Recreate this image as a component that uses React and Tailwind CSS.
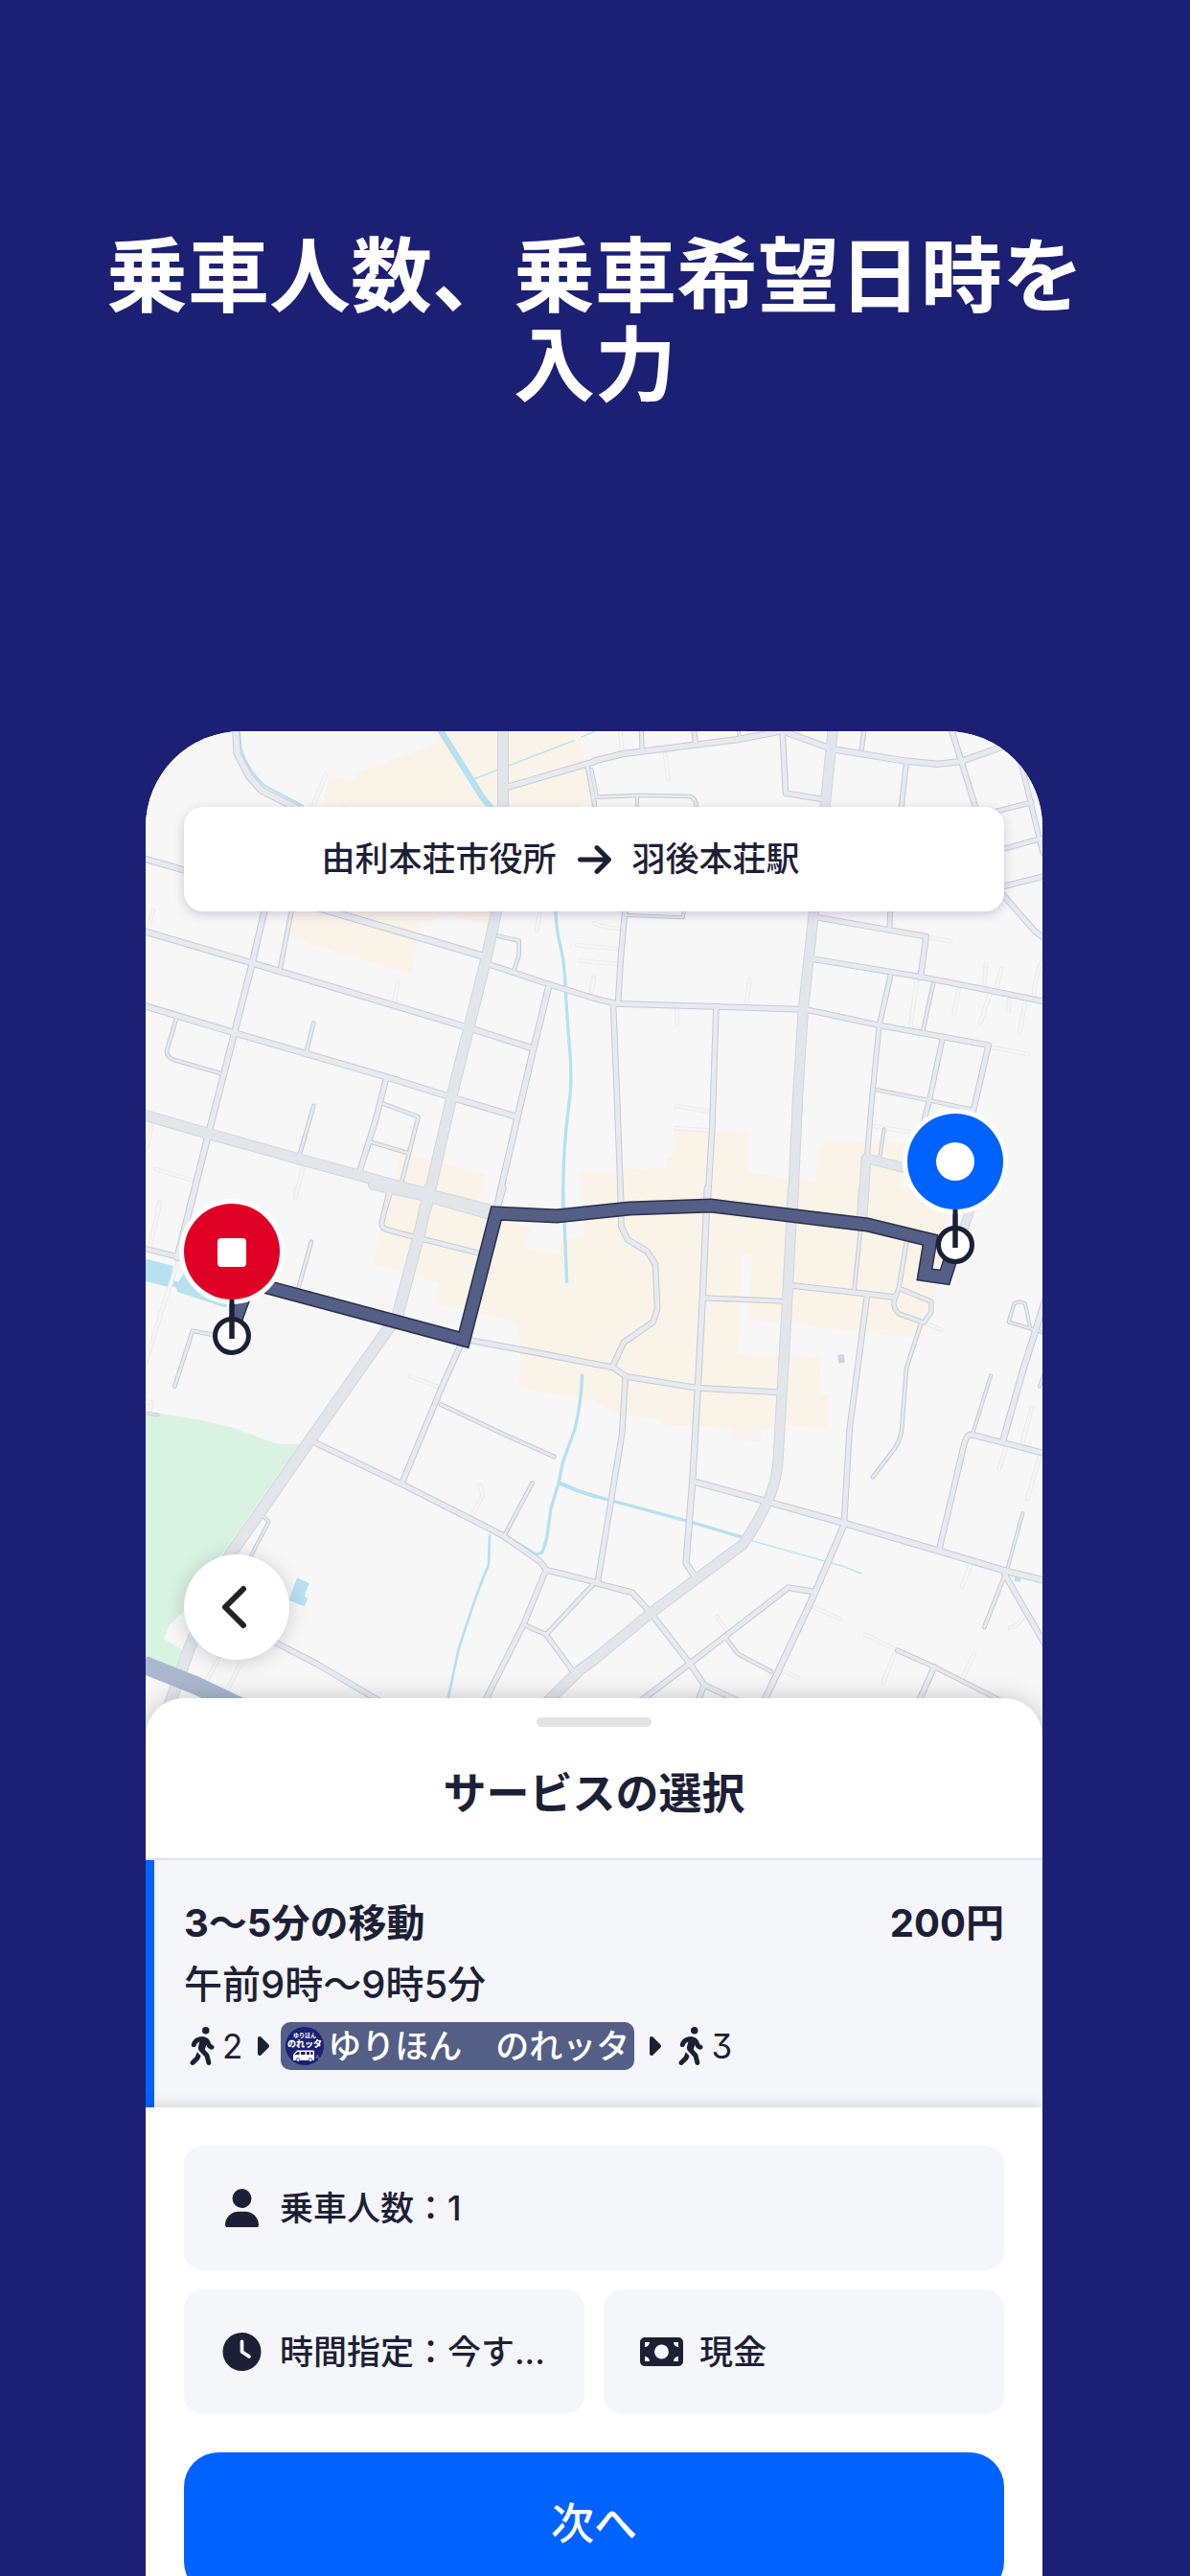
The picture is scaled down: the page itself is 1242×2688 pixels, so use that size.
import React from 'react'
import { FaArrowRight, FaCaretRight, FaClock, FaMoneyBill, FaPersonWalking, FaUser } from 'react-icons/fa6'

// The map is drawn as four tiles, each with its own local units (3 per map pixel).
// Roads are [width, path].
const TILES = [
  {
    id: 'nw',
    transform: 'translate(150 760) scale(0.33333)',
    areas: [
      ['#faf4e8', 'M565 260 L565 215 L582 147 L655 163 L675 138 L925 45 L905 0 L1360 0 L1380 90 L1402 225 L1330 260Z'],
      ['#f7f7f7', 'M1368 30 L1420 0 L1420 85 L1380 90Z'],
      ['#faf4e8', 'M475 560 L455 655 L840 772 L868 600 L905 606 L940 560Z'],
      ['#faf4e8', 'M950 575 L1075 617 L1085 560Z'],
      ['#faf4e8', 'M805 1330 L940 1362 L1070 1398 L1050 1500 L780 1500 L790 1400Z'],
      ['#faf4e8', 'M1362 1390 L1412 1386 L1412 1500 L1372 1500Z'],
    ],
    water: [
      [6, 'M300 0 L304 60 Q326 134 380 180 L500 243'],
      [20, 'M925 0 L1060 215 L1100 265'],
      [4, 'M1030 160 L1350 37'],
      [4, 'M1368 28 L1412 10'],
      [10, 'M1290 560 Q1290 620 1302 670 Q1320 740 1320 810 L1330 960 Q1342 1080 1335 1150 Q1320 1260 1315 1360 L1312 1500'],
    ],
    service: [
      'M570 145 L530 245', 'M625 242 L605 262', 'M30 570 L12 630', 'M795 797 L785 860', 'M500 1370 L475 1468',
      'M38 1380 L155 1415', 'M25 1235 L10 1310', 'M50 1485 L40 1510', 'M1240 580 L1230 632', 'M1357 678 L1410 684',
      'M1365 726 L1410 732', 'M1408 782 L1400 830',
    ],
    minor: [
      [24, 'M288 0 L293 80 L330 150 L370 195 L480 250'],
      [22, 'M1145 182 L1410 105'],
      [16, 'M1390 120 L1412 240'],
      [22, 'M0 408 L130 445'],
      [22, 'M378 570 L340 735 L205 1260 L145 1500'],
      [16, 'M463 570 L428 748'],
      [24, 'M540 560 L1060 712'],
      [22, 'M0 635 L340 735 L1020 938 L1220 1003'],
      [14, 'M1110 650 L1175 665 L1175 710 L1160 755'],
      [20, 'M1085 740 L1265 800 L1410 845'],
      [22, 'M0 868 L290 955 L755 1090 L980 1160 L1165 1215'],
      [22, 'M1268 810 L1220 1005 L1165 1240 L1105 1500'],
      [14, 'M103 905 L72 1010 Q72 1030 95 1038 L240 1080'],
      [14, 'M532 922 L510 1010'],
      [20, 'M758 1100 L725 1230 L675 1390'],
      [14, 'M750 1175 L860 1216 L805 1430'],
      [14, 'M712 1295 L828 1330'],
      [14, 'M532 1182 L488 1335'],
      [18, 'M772 1450 L757 1500'],
    ],
    major: [
      [36, 'M1125 0 L1125 300 L1105 570 L1075 710 L965 1150 L885 1500'],
      [36, 'M0 1210 L200 1268 L500 1352 L890 1458 L1100 1512'],
    ],
  },
  {
    id: 'ne',
    transform: 'translate(620 760) scale(0.33333)',
    areas: [
      ['#faf4e8', 'M0 1388 L228 1375 L228 1345 L246 1345 L250 1260 L483 1265 L478 1390 L695 1418 L700 1305 L720 1305 L725 1285 L860 1293 L1000 1300 L965 1400 L965 1445 L1130 1480 L1130 1500 L0 1500Z'],
    ],
    water: [],
    service: [
      'M82 10 L88 70', 'M222 80 L233 158', 'M487 787 L478 862', 'M260 875 V925', 'M257 1183 L358 1198',
      'M255 1252 L355 1258', 'M0 610 Q30 625 80 627', 'M0 684 L75 690', 'M0 732 L72 737', 'M0 780 L-6 820',
      'M1050 655 L1115 665', 'M1227 738 L1222 808', 'M1275 753 L1258 818', 'M1142 815 L1127 893',
      'M1238 835 L1210 922', 'M1300 848 L1298 885', 'M1350 855 L1332 952', 'M1405 725 Q1380 770 1377 840',
      'M1010 795 L990 935', 'M1245 998 L1360 1020', 'M875 1245 L995 1265',
    ],
    minor: [
      [22, 'M0 102 L90 80 L450 35 L590 8 L745 65 L975 102 L1075 112 L1150 103 L1300 50'],
      [20, 'M590 15 L600 203 L715 222'],
      [18, 'M312 0 L318 48'],
      [16, 'M148 0 L150 65'],
      [12, 'M452 0 L455 25'],
      [16, 'M846 0 L838 65'],
      [18, 'M978 105 L962 250'],
      [20, 'M1118 0 L1150 103 L1195 250'],
      [18, 'M1250 262 L1370 232'],
      [18, 'M1335 100 L1405 390'],
      [18, 'M1280 378 L1410 342'],
      [20, 'M1280 495 L1410 463'],
      [20, 'M1275 515 L1380 635 L1420 665'],
      [14, 'M-8 130 L8 215 L150 210 L300 213 Q322 220 320 250'],
      [12, 'M135 215 V250'],
      [20, 'M97 570 L85 700 L75 862'],
      [12, 'M100 585 L278 592 L282 570'],
      [20, 'M0 845 L70 862 L400 872 L655 880 L700 888 L895 930 L1235 992 L1187 1200'],
      [20, 'M690 590 L870 622 L1040 652 L1022 780'],
      [20, 'M685 722 L1035 780 L1410 855'],
      [18, 'M928 570 L925 625'],
      [20, 'M60 865 L72 1160 L85 1500'],
      [20, 'M382 880 L370 1250 L355 1500'],
      [18, 'M928 775 L893 930 L870 1160 L855 1340'],
      [14, 'M1062 800 L1030 945'],
      [18, 'M1090 975 L1050 1165 L1030 1240'],
      [14, 'M885 1132 L1050 1165 L1190 1195'],
      [12, 'M908 1255 L895 1340'],
    ],
    major: [
      [34, 'M748 0 L725 230 L690 560 L655 880 L638 1150 L622 1500'],
      [32, 'M980 1378 L852 1346 L842 1500'],
    ],
  },
  {
    id: 'sw',
    transform: 'translate(150 1240) scale(0.33333 0.34436)',
    areas: [
      ['#faf4e8', 'M790 0 L740 130 L718 232 L925 285 L912 350 L1165 405 L1180 460 L1175 605 L1412 645 L1412 0Z'],
      ['#f7f7f7', 'M1060 0 L1040 60 L1210 120 L1195 180 L1300 198 L1310 158 L1382 143 L1368 0Z'],
      ['#d8f3e2', 'M0 675 L50 682 L180 702 L275 724 L390 765 L430 777 L490 773 L240 1115 L150 1260 L80 1325 L63 1365 L120 1398 L100 1460 L0 1425Z'],
      ['#b6e1f1', 'M0 212 L92 235 L80 300 L0 280Z'],
      ['#b6e1f1', 'M88 278 L108 284 L128 255 L262 348 L258 362 L108 314 L100 300 L86 296Z'],
      ['#b6e1f1', 'M480 1180 L518 1197 L503 1235 L513 1243 L503 1267 L455 1248Z'],
    ],
    water: [
      [10, 'M1312 0 L1318 120 L1325 288'],
      [10, 'M1373 563 Q1370 650 1350 730 L1312 830 L1300 890 L1275 970 L1262 1060 L1248 1103 L1230 1110 L1100 1035'],
      [12, 'M1300 893 L1370 920 L1420 935'],
      [8, 'M1083 1050 L1080 1140 Q1040 1230 985 1400 L950 1560'],
    ],
    service: [
      'M50 45 L20 175', 'M110 215 L60 360 L0 545', 'M835 570 L930 605', 'M1052 898 L1062 930 L1025 995',
      'M235 1425 L190 1503', 'M302 1443 L255 1532', 'M0 645 L25 650 L20 670', 'M478 0 L475 25',
    ],
    minor: [
      [18, 'M770 5 L745 105 Q745 122 765 126 L850 148 L1045 195'],
      [22, 'M160 0 L105 210'],
      [18, 'M0 182 L110 208'],
      [14, 'M525 162 L485 300'],
      [14, 'M215 443 L153 432 L97 600'],
      [22, 'M1125 0 L1108 55'],
      [20, 'M1020 460 L1230 498 L1410 532'],
      [20, 'M990 480 L930 610 L810 890'],
      [14, 'M930 655 L1120 742 L1285 813'],
      [20, 'M535 770 L820 902 L1020 1000 L1120 1050 L1240 1130 L1262 1157 L1410 1192'],
      [20, 'M1260 1155 L1190 1320 L1065 1560'],
      [16, 'M1190 1322 L1260 1352 L1412 1195'],
      [18, 'M1260 1352 L1345 1465'],
      [14, 'M1217 893 L1130 1050'],
      [12, 'M370 990 L392 1010 L335 1115'],
      [20, 'M400 1370 L540 1440 L750 1560'],
      [10, 'M0 680 L45 687'],
    ],
    major: [
      [36, 'M720 -12 L890 24 L1085 78'],
      [38, 'M895 0 L865 130 L795 385 L530 750 L365 980 L270 1110 L140 1400 L112 1480 L75 1580'],
      [35, 'M1240 1580 L1275 1545 L1365 1460 L1410 1428'],
    ],
  },
  {
    id: 'se',
    transform: 'translate(620 1240) scale(0.33333 0.34436)',
    areas: [
      ['#faf4e8', 'M0 0 L1110 0 L1108 60 L1080 250 L1065 340 L1025 455 L485 398 L495 198 L463 203 L450 500 L710 512 L706 620 L738 625 L725 730 L600 717 L590 730 L425 735 L425 727 L208 715 L205 702 L68 680 L0 648Z'],
      ['#f5f4f3', 'M425 733 L522 730 L522 768 L422 762Z'],
      ['#cfd6df', 'M762 505 L782 502 L786 528 L766 531Z'],
      ['#b6e1f1', 'M1318 1177 L1337 1180 L1335 1193 L1315 1190Z'],
    ],
    water: [
      [10, 'M0 932 L300 1010 L480 1062'],
      [4, 'M480 1064 L780 1145 L838 1168'],
    ],
    service: [
      'M1035 408 L1087 428', 'M1370 668 L1340 775', 'M1290 785 L1268 850', 'M1395 815 L1357 940',
      'M1180 1138 L1152 1208', 'M1345 1295 Q1325 1330 1302 1332', 'M850 1353 L945 1398 L905 1498',
      'M1190 1412 L1155 1482', 'M685 1268 L770 1305', 'M385 1300 L415 1340', 'M580 1455 L637 1483',
    ],
    minor: [
      [20, 'M83 0 L85 115 L105 155 L165 190 L192 230 L198 365 L185 405 L93 467 L60 535'],
      [20, 'M0 532 L60 543 L100 570 L325 605 L580 618'],
      [22, 'M355 0 L340 330 L325 605 L308 890 L288 1135 L318 1180'],
      [18, 'M345 332 L590 342'],
      [20, 'M625 295 L855 320 L942 330'],
      [14, 'M835 120 L815 305'],
      [16, 'M978 165 L955 300 L940 340 Q935 365 955 380 L1032 407 L1056 375 V343 L960 305'],
      [14, 'M1025 405 L978 545 L963 735 Q955 770 940 790 L873 875'],
      [20, 'M855 325 L800 730 L783 1010'],
      [20, 'M98 570 L88 740 L12 1190'],
      [22, 'M310 888 L545 950 L785 1015 L1085 1100 L1290 1160 L1410 1188'],
      [22, 'M785 1015 L685 1240 L520 1580'],
      [20, 'M0 1195 L120 1225 L180 1290 L300 1440 L345 1505 L470 1562'],
      [20, 'M345 1505 L318 1570'],
      [20, 'M685 1222 L608 1210 L300 1440 L130 1565'],
      [14, 'M415 1365 L450 1410 L555 1465'],
      [12, 'M1242 568 L1185 745'],
      [20, 'M1082 1090 L1160 770 Q1168 742 1185 747 L1410 803'],
      [22, 'M1412 340 L1345 545 L1280 765'],
      [12, 'M1412 438 L1298 405 L1315 350 Q1330 338 1350 350 L1365 420'],
      [12, 'M1342 985 L1295 1150'],
      [14, 'M1285 1175 L1222 1330'],
      [20, 'M1286 1170 L1345 1270 L1420 1395'],
      [12, 'M1410 560 L1395 600'],
      [16, 'M950 1400 L1065 1450 L1290 1560'],
      [20, 'M1065 1450 L1012 1565'],
    ],
    major: [
      [34, 'M623 0 L605 340 L575 840 Q567 900 545 945 Q510 1020 465 1080 L180 1285 L0 1428'],
      [34, 'M845 0 L838 100'],
      [30, 'M1200 0 L1155 130'],
    ],
  },
]

const ROUTE = 'M242 1388 L260 1338 L484 1398 L518 1266 L581 1269 L657 1261 L742 1258 L905 1278 L971 1294 L965 1330 L986 1333 L997 1299'

function MapLayer({ render }) {
  return TILES.map((tile) => (
    <g key={tile.id} transform={tile.transform}>
      {render(tile)}
    </g>
  ))
}

function strokes(roads, color, inset = 0) {
  return roads.map(([width, d]) => <path key={d} d={d} stroke={color} strokeWidth={width - inset} />)
}

function Pin({ x, y, stemEnd, color, children }) {
  return (
    <g>
      <circle cx={x} cy={stemEnd - 3} r="17.5" fill="#fff" stroke="#1c2036" strokeWidth="5" />
      <path d={`M${x} ${y + 40} V${stemEnd}`} stroke="#1c2036" strokeWidth="5" />
      <circle cx={x} cy={y} r="55" fill="#fff" />
      <circle cx={x} cy={y} r="50" fill={color} />
      <path d={`M${x} ${y + 50} V${stemEnd}`} stroke="#1c2036" strokeWidth="5" />
      {children}
    </g>
  )
}

function RouteMap() {
  return (
    <svg viewBox="152 763 936 1049" className="block w-full" aria-hidden="true">
      <rect x="152" y="763" width="936" height="1049" fill="#f7f7f7" />
      <MapLayer render={(t) => t.areas.map(([fill, d]) => <path key={d} d={d} fill={fill} />)} />
      <g fill="none" strokeLinejoin="round" strokeLinecap="butt">
        <MapLayer render={(t) => strokes(t.water, '#b6e1f1')} />
      </g>
      <g fill="none" strokeLinejoin="round" strokeLinecap="round">
        <MapLayer render={(t) => strokes(t.service.map((d) => [14, d]), '#e9e9ea')} />
        <MapLayer render={(t) => strokes(t.service.map((d) => [14, d]), '#f5f5f5', 5)} />
        <MapLayer render={(t) => strokes(t.minor, '#c6cad4')} />
        <MapLayer render={(t) => strokes(t.major, '#d0d6dc')} />
        <MapLayer render={(t) => strokes(t.minor, '#e7eaef', 6)} />
        <MapLayer render={(t) => strokes(t.major, '#e2e6ea', 6)} />
      </g>
      <path d="M150 1737 L205 1759 L262 1786" fill="none" stroke="#a9b8cf" strokeWidth="19" />
      <path d={ROUTE} fill="none" stroke="#2b2f48" strokeWidth="15" />
      <path d={ROUTE} fill="none" stroke="#545f87" strokeWidth="12" />
      <Pin x={242} y={1306} stemEnd={1397} color="#e00025">
        <rect x="227" y="1292" width="30" height="30" rx="4" fill="#fff" />
      </Pin>
      <Pin x={997} y={1212} stemEnd={1302} color="#0062ff">
        <circle cx="997" cy="1212" r="20" fill="#fff" />
      </Pin>
    </svg>
  )
}

function BusLogo() {
  return (
    <svg viewBox="0 0 40 40" className="size-10 shrink-0" aria-hidden="true">
      <circle cx="20" cy="20" r="20" fill="#1b1f76" />
      <g fill="#fff" textAnchor="middle" fontWeight="700">
        <text x="20" y="11" fontSize="6">ゆりほん</text>
        <text x="20" y="21" fontSize="9" fontWeight="900">のれッタ</text>
      </g>
      <path d="M8 35 V29 L12 24.500 H29 Q30 24.500 30 26 V35Z" fill="#fff" />
      <path d="M9.500 29 L12.500 26 H14.500 V29Z M16 26 H20.500 V29 H16Z M22 26 H25 V29 H22Z M26.300 26 H28.500 V29 H26.300Z" fill="#1b1f76" />
      <circle cx="13" cy="34.500" r="1.800" fill="#fff" stroke="#1b1f76" strokeWidth="0.800" />
      <circle cx="26" cy="34.500" r="1.800" fill="#fff" stroke="#1b1f76" strokeWidth="0.800" />
      <path d="M32 33 a1.500 1.500 0 1 1 2 1 M32 30.500 l2 -1" fill="none" stroke="#8c90c4" strokeWidth="0.800" />
    </svg>
  )
}

function Walk({ minutes }) {
  return (
    <span className="flex items-center gap-2 pl-1.5">
      <FaPersonWalking className="h-10 w-[26px]" />
      {minutes}
    </span>
  )
}

function Option({ icon: Icon, label, className = '' }) {
  return (
    <button type="button" className={`flex h-[130px] min-w-0 items-center gap-5 rounded-[20px] bg-[#f5f6fa] px-10 text-[35px] font-medium ${className}`}>
      <span className="flex w-10 shrink-0 justify-center">
        <Icon className="h-10 w-[45px] shrink-0" />
      </span>
      <span className="truncate">{label}</span>
    </button>
  )
}

export default function App() {
  return (
    <main className="flex h-screen flex-col overflow-hidden bg-[#1c2074] font-['Inter','Noto_Sans_CJK_JP',sans-serif] text-[#1c2036]" lang="ja">
      <h1 className="px-20 pt-[242px] text-center text-[85px] leading-[93px] font-bold text-white">
        乗車人数、乗車希望日時を入力
      </h1>

      <div className="mt-[335px] mr-[154px] ml-[152px] shrink-0 overflow-hidden rounded-t-[100px] bg-white">
        <section className="relative">
          <RouteMap />
          <div className="absolute inset-x-10 top-[79px] flex h-[109px] items-center justify-center gap-[22px] rounded-[20px] bg-white pr-[70px] text-[35px] font-medium shadow-[0_3px_12px_rgba(40,20,80,0.2)]">
            <span>由利本荘市役所</span>
            <FaArrowRight className="h-10 w-[35px]" />
            <span>羽後本荘駅</span>
          </div>
          <button
            type="button"
            aria-label="戻る"
            className="absolute bottom-20 left-10 flex size-[110px] items-center justify-center rounded-full bg-white shadow-[0_2px_20px_rgba(0,0,0,0.18)]"
          >
            <svg viewBox="0 0 30 46" className="h-[46px] w-[30px]" fill="none" stroke="#222" strokeWidth="6" strokeLinecap="round" strokeLinejoin="round">
              <path d="M22 4 L3 23 L22 42" />
            </svg>
          </button>
        </section>

        <section className="relative -mt-10 rounded-t-[40px] bg-white shadow-[0_0_24px_rgba(0,0,0,0.2)]">
          <header className="border-b-2 border-[#e0e3ee] pt-5 pb-[37px]">
            <div className="mx-auto h-2.5 w-[120px] rounded-full bg-[#e3e3e3]" />
            <h2 className="mt-10 text-center text-[45px] leading-[60px] font-bold">サービスの選択</h2>
          </header>

          <button type="button" className="block w-full border-l-[9px] border-[#0062ff] bg-[#f5f6fa] pt-[34px] pr-10 pb-8 pl-[31px] text-left">
            <span className="flex justify-between text-[40px] leading-[64px] font-bold">
              <span>3〜5分の移動</span>
              <span>200円</span>
            </span>
            <span className="block text-[40px] leading-[64px] font-medium">午前9時〜9時5分</span>
            <span className="flex h-16 items-center gap-3 text-[35px] [font-feature-settings:'cv09']">
              <Walk minutes={2} />
              <FaCaretRight className="h-8 w-4" />
              <span className="flex h-[50px] items-center gap-1 rounded-[10px] bg-[#545f87] px-[5px] font-medium text-white">
                <BusLogo />
                ゆりほん　のれッタ
              </span>
              <FaCaretRight className="h-8 w-4" />
              <Walk minutes={3} />
            </span>
          </button>

          <div className="relative grid grid-cols-2 gap-5 bg-white px-10 pt-10 pb-20 shadow-[0_0_16px_rgba(0,0,0,0.18)]">
            <Option icon={FaUser} label="乗車人数：1" className="col-span-2" />
            <Option icon={FaClock} label="時間指定：今す..." />
            <Option icon={FaMoneyBill} label="現金" />
            <button type="button" className="col-span-2 mt-5 h-[150px] rounded-[36px] bg-[#0062ff] text-[45px] font-medium text-white">
              次へ
            </button>
          </div>
        </section>
      </div>
    </main>
  )
}
